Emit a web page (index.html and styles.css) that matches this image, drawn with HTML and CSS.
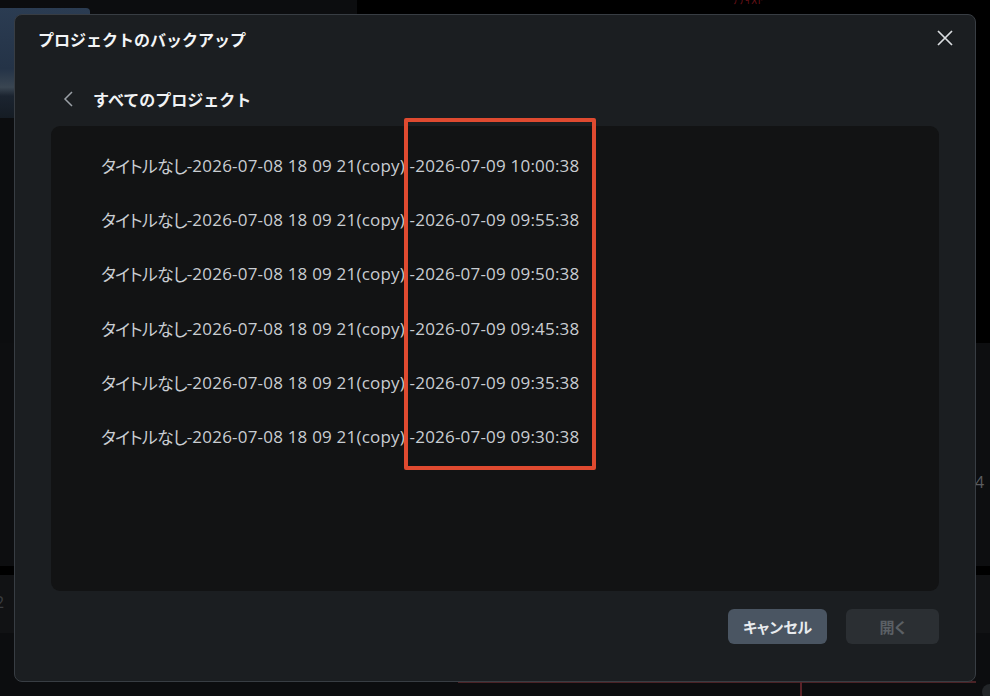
FILE: index.html
```html
<!DOCTYPE html>
<html lang="ja">
<head>
<meta charset="utf-8">
<title>プロジェクトのバックアップ</title>
<link rel="stylesheet" href="styles.css">
</head>
<body>
<div class="backdrop">
  <div class="bg-thumb"></div>
  <div class="bg-black"><span class="bg-red-text">ｱﾃｷｽﾄ</span></div>
  <div class="bg-band-a"><span class="bg-num right">4</span></div>
  <div class="bg-band-b"></div>
  <div class="bg-band-c"><span class="bg-num">2</span></div>
  <div class="bg-line-red"></div>
  <div class="bg-vline"></div>
  <div class="bg-dot"></div>
</div>

<div class="dialog">
  <header class="dialog-header">
    <h1 class="dialog-title">プロジェクトのバックアップ</h1>
    <button class="close-btn" aria-label="閉じる">
      <svg width="16" height="16" viewBox="0 0 16 16"><path d="M1 1 L15 15 M15 1 L1 15" stroke="#dadde0" stroke-width="1.7" fill="none"/></svg>
    </button>
  </header>

  <div class="back-row">
    <svg class="chev" width="11" height="16" viewBox="0 0 11 16"><path d="M9 1 L2 8 L9 15" stroke="#9aa0a6" stroke-width="1.5" fill="none"/></svg>
    <span class="back-label">すべてのプロジェクト</span>
  </div>

  <div class="list-panel">
    <ul class="list">
      <li class="row"><span class="kana">タイトルなし</span>-2026-07-08 18 09 21(copy) -2026-07-09 10:00:38</li>
      <li class="row"><span class="kana">タイトルなし</span>-2026-07-08 18 09 21(copy) -2026-07-09 09:55:38</li>
      <li class="row"><span class="kana">タイトルなし</span>-2026-07-08 18 09 21(copy) -2026-07-09 09:50:38</li>
      <li class="row"><span class="kana">タイトルなし</span>-2026-07-08 18 09 21(copy) -2026-07-09 09:45:38</li>
      <li class="row"><span class="kana">タイトルなし</span>-2026-07-08 18 09 21(copy) -2026-07-09 09:35:38</li>
      <li class="row"><span class="kana">タイトルなし</span>-2026-07-08 18 09 21(copy) -2026-07-09 09:30:38</li>
    </ul>
    <div class="highlight"></div>
  </div>

  <footer class="dialog-footer">
    <button class="btn btn-cancel">キャンセル</button>
    <button class="btn btn-open" disabled>開く</button>
  </footer>
</div>
</body>
</html>
```

FILE: styles.css
```css
* { box-sizing: border-box; }
html, body {
  margin: 0;
  padding: 0;
  width: 990px;
  height: 696px;
  overflow: hidden;
  background: #0c0d0f;
  font-family: "Open Sans", "Noto Sans CJK JP", sans-serif;
}

/* background app fragments behind the modal */
.backdrop {
  position: absolute;
  inset: 0;
  z-index: 0;
}
.bg-thumb {
  position: absolute;
  left: 0;
  top: 8px;
  width: 90px;
  height: 110px;
  border-top-right-radius: 4px;
  background: linear-gradient(180deg, #2b3c52 0%, #243347 55%, #3a4652 72%, #1b2430 80%, #151c24 100%);
}
.bg-black {
  position: absolute;
  left: 357px;
  right: 0;
  top: 0;
  height: 343px;
  background: #000;
}
.bg-red-text {
  position: absolute;
  left: 376px;
  top: -10px;
  font-size: 12px;
  color: #6a1218;
}
.bg-band-a {
  position: absolute;
  left: 0; right: 0;
  top: 343px;
  height: 223px;
  background: #0d0e10;
}
.bg-band-b {
  position: absolute;
  left: 0; right: 0;
  top: 566px;
  height: 9px;
  background: #000;
}
.bg-band-c {
  position: absolute;
  left: 0; right: 0;
  top: 575px;
  height: 58px;
  background: #111214;
}
.bg-num {
  position: absolute;
  left: -5px;
  top: 16px;
  color: #3a3d41;
  font-size: 16px;
}
.bg-num.right {
  left: 975px;
  top: 128px;
  color: #5a5d60;
}
.bg-line-red {
  position: absolute;
  left: 458px;
  width: 518px;
  top: 681px;
  height: 2px;
  background: #4a2226;
}
.bg-vline {
  position: absolute;
  left: 800px;
  top: 682px;
  width: 2px;
  height: 14px;
  background: #5a2228;
}
.bg-dot {
  position: absolute;
  left: 982px;
  top: 684px;
  width: 16px;
  height: 16px;
  border-radius: 50%;
  background: #222528;
}

/* modal */
.dialog {
  position: absolute;
  left: 14px;
  top: 14px;
  width: 962px;
  height: 668px;
  z-index: 1;
  background: #1b1e21;
  border: 1px solid #383d43;
  border-radius: 8px;
  display: flex;
  flex-direction: column;
}
.dialog-header {
  display: flex;
  align-items: center;
  justify-content: space-between;
  height: 46px;
  padding: 0 22px 0 23px;
}
.dialog-title {
  margin: 0;
  font-size: 16px;
  font-weight: 700;
  color: #f3f5f7;
  padding-top: 2px;
}
.close-btn {
  border: 0;
  background: none;
  padding: 0;
  width: 16px;
  height: 16px;
  display: flex;
}
.back-row {
  display: flex;
  align-items: center;
  height: 65px;
  padding: 10px 0 0 48px;
}
.chev { margin-right: 19px; margin-top: 1px; }
.back-label {
  font-size: 16px;
  font-weight: 700;
  color: #f1f3f5;
}
.list-panel {
  position: relative;
  margin: 0 36px;
  height: 465px;
  background: #121314;
  border-radius: 9px;
}
.list {
  list-style: none;
  margin: 0;
  padding: 12px 0 0 50px;
}
.row {
  height: 54.3px;
  display: flex;
  align-items: center;
  font-size: 17px;
  letter-spacing: 0.2px;
  color: #c9cdd2;
  font-feature-settings: "palt";
  white-space: pre;
}
.kana {
  letter-spacing: -0.7px;
}
.highlight {
  position: absolute;
  left: 353px;
  top: -8px;
  width: 192px;
  height: 352px;
  border: 4px solid #df4a30;
  border-radius: 2px;
}
.dialog-footer {
  display: flex;
  justify-content: flex-end;
  gap: 19px;
  padding: 18px 36px 0 0;
}
.btn {
  height: 35px;
  border: 0;
  border-radius: 6px;
  font-family: "Noto Sans CJK JP", sans-serif;
  font-size: 15px;
  font-weight: 700;
  font-feature-settings: "palt";
}
.btn-cancel {
  width: 99px;
  background: #4a5562;
  color: #e8ebee;
}
.btn-open {
  width: 93px;
  background: #2b2f33;
  color: #5b6065;
}
```
